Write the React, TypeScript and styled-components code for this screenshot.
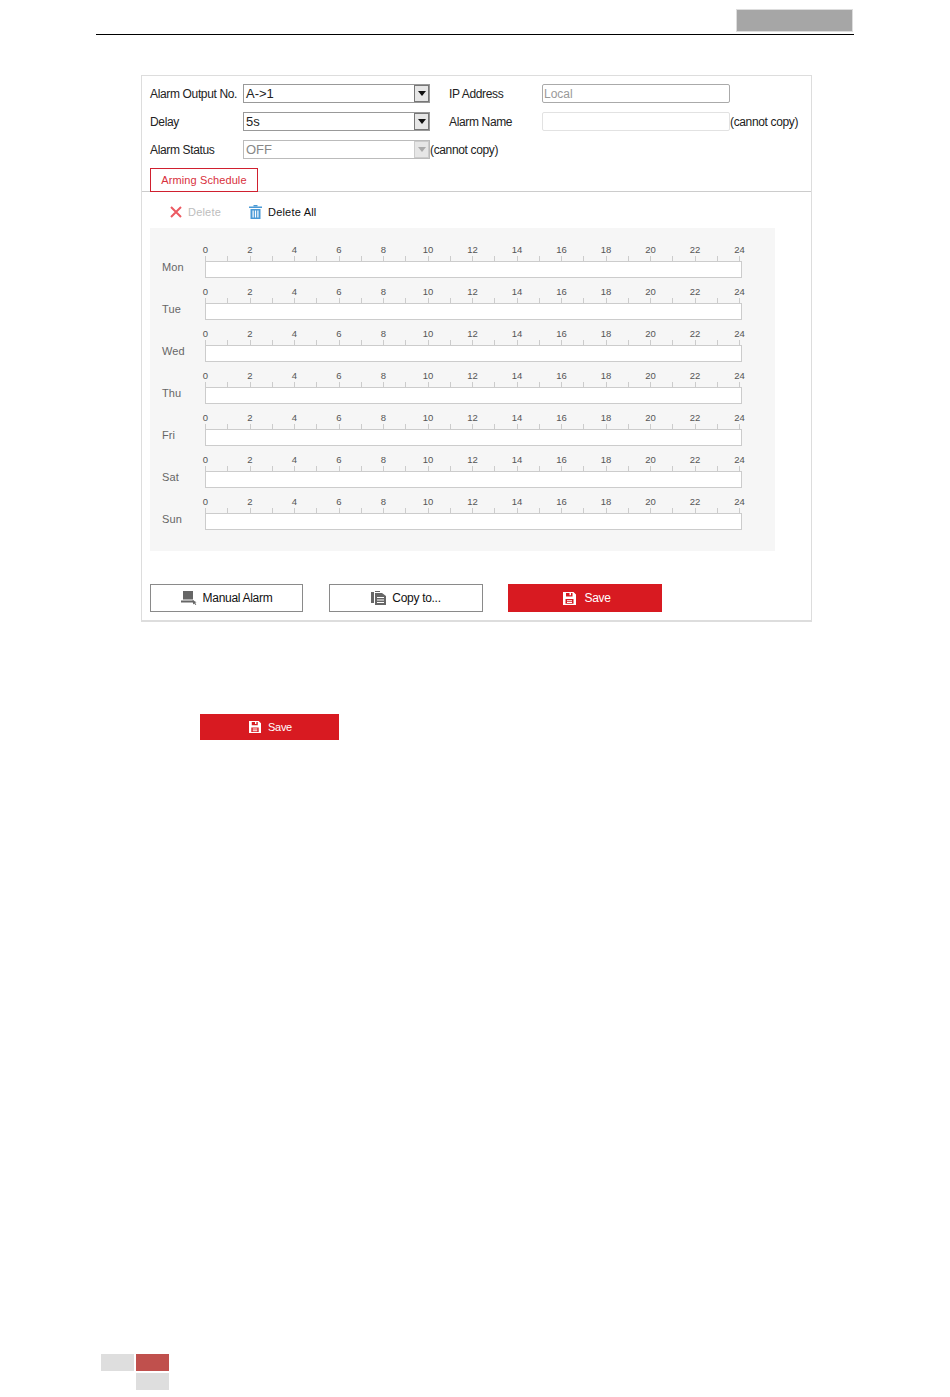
import React from "react";
import styled, { createGlobalStyle } from "styled-components";

const GlobalStyle = createGlobalStyle`
  * { box-sizing: border-box; }
  html, body { margin: 0; padding: 0; background: #fff; }
  body { font-family: "Liberation Sans", Arial, sans-serif; color: #222; }
`;

const Page = styled.div`
  width: 950px;
  height: 1397px;
  display: flex;
  flex-direction: column;
  overflow: hidden;
`;

const Header = styled.header`
  margin: 9px 96px 0;
  width: 758px;
  height: 26px;
  display: flex;
  justify-content: flex-end;
  border-bottom: 1px solid #000;
`;

const HeaderBlock = styled.div`
  width: 117px;
  height: 23px;
  margin-right: 1px;
  background: #a6a6a6;
  border: 1px solid #ddd;
`;

const Panel = styled.section`
  margin: 40px 0 0 141px;
  width: 671px;
  height: 547px;
  border: 1px solid #ddd;
  border-bottom-width: 2px;
  display: flex;
  flex-direction: column;
`;

const Form = styled.div`
  padding: 8px 0 0 8px;
  display: grid;
  grid-template-columns: 93px 187px 19px 93px 188px 60px;
  grid-auto-rows: 19px;
  row-gap: 9px;
  align-items: center;
  font-size: 12px;
`;

const Label = styled.span`
  white-space: nowrap;
  letter-spacing: -0.35px;
`;

const Hint = styled.span`
  white-space: nowrap;
  letter-spacing: -0.35px;
`;

const Select = styled.div<{ $disabled?: boolean }>`
  height: 19px;
  border: 1px solid ${p => (p.$disabled ? "#bbb" : "#999")};
  display: flex;
  align-items: center;
  justify-content: space-between;
  padding-left: 2px;
  font-size: 13px;
  color: ${p => (p.$disabled ? "#888" : "#222")};
`;

const Arrow = styled.div<{ $disabled?: boolean }>`
  width: 15px;
  height: 17px;
  background: #e6e6e6;
  border: 1px solid ${p => (p.$disabled ? "#ccc" : "#777")};
  display: flex;
  align-items: center;
  justify-content: center;
  &::after {
    content: "";
    border-left: 4px solid transparent;
    border-right: 4px solid transparent;
    border-top: 5px solid ${p => (p.$disabled ? "#aaa" : "#111")};
  }
`;

const TextBox = styled.div<{ $light?: boolean }>`
  height: 19px;
  border: 1px solid ${p => (p.$light ? "#e2e2e2" : "#aaa")};
  border-radius: 2px;
  padding-left: 1px;
  font-size: 12px;
  line-height: 18px;
  color: #999;
`;

const TabBar = styled.div`
  margin-top: 9px;
  padding-left: 8px;
  border-bottom: 1px solid #ccc;
  height: 24px;
`;

const Tab = styled.div`
  width: 108px;
  height: 24px;
  border: 1px solid #d0202f;
  background: #fff;
  color: #d8303c;
  font-size: 11px;
  letter-spacing: 0.1px;
  display: flex;
  align-items: center;
  justify-content: center;
`;

const Toolbar = styled.div`
  height: 36px;
  padding: 4px 0 0 28px;
  display: flex;
  align-items: center;
  font-size: 11px;
`;

const ToolItem = styled.div<{ $disabled?: boolean; $width: number }>`
  width: ${p => p.$width}px;
  display: flex;
  align-items: center;
  gap: 6px;
  color: ${p => (p.$disabled ? "#bdbdbd" : "#111")};
  letter-spacing: 0.2px;
`;

const Schedule = styled.div`
  margin-left: 8px;
  width: 625px;
  height: 323px;
  background: #f6f6f6;
  padding-top: 16px;
`;

const DayRow = styled.div`
  height: 42px;
  display: flex;
  align-items: flex-start;
  padding-left: 12px;
`;

const DayName = styled.div`
  width: 43px;
  margin-top: 17px;
  font-size: 11px;
  letter-spacing: 0.1px;
  color: #666;
`;

const Track = styled.div`
  width: 537px;
  display: flex;
  flex-direction: column;
`;

const Numbers = styled.div`
  height: 12px;
  margin-right: 2px;
  display: flex;
  justify-content: space-between;
  font-size: 9.5px;
  line-height: 12px;
  color: #555;
`;

const NumberCell = styled.span`
  width: 1px;
  display: flex;
  justify-content: center;
`;

const Ticks = styled.div`
  height: 5px;
  margin-right: 2px;
  display: flex;
  justify-content: space-between;
`;

const Tick = styled.span`
  width: 1px;
  background: #ccc;
`;

const Bar = styled.div`
  height: 17px;
  background: #fff;
  border: 1px solid #ccc;
`;

const Buttons = styled.div`
  margin: 33px 0 0 8px;
  display: flex;
  gap: 26px;
`;

const Button = styled.div<{ $primary?: boolean }>`
  width: 153px;
  height: 28px;
  display: flex;
  align-items: center;
  justify-content: center;
  gap: ${p => (p.$primary ? "8px" : "6px")};
  padding-left: ${p => (p.$primary ? "4px" : "0")};
  font-size: 12px;
  letter-spacing: -0.3px;
  border: ${p => (p.$primary ? "none" : "1px solid #8a8a8a")};
  background: ${p => (p.$primary ? "#d81a21" : "#fff")};
  color: ${p => (p.$primary ? "#fff" : "#111")};
`;

const WideButton = styled(Button)`
  width: 154px;
  margin-left: ${p => (p.$primary ? "-1px" : "0")};
`;

const LoneSave = styled(Button)`
  margin: 92px 0 0 200px;
  width: 139px;
  height: 26px;
  gap: 7px;
  padding-left: 2px;
  font-size: 11px;
`;

const Footer = styled.footer`
  margin: auto 0 7px 101px;
  display: grid;
  grid-template-columns: 33px 33px;
  grid-auto-rows: 17px;
  gap: 2px;
`;

const FooterCell = styled.div<{ $accent?: boolean; $col?: number }>`
  grid-column: ${p => p.$col ?? "auto"};
  background: ${p => (p.$accent ? "#c0504d" : "#dedede")};
`;

const DeleteIcon = () => (
  <svg width="12" height="12" viewBox="0 0 12 12">
    <path d="M1 1l10 10M11 1L1 11" stroke="#ec5a62" strokeWidth="2" fill="none" />
  </svg>
);

const TrashIcon = () => (
  <svg width="13" height="14" viewBox="0 0 13 14" fill="#4a9ad6">
    <rect x="4.5" y="0" width="4" height="1.5" />
    <rect x="0" y="1.5" width="13" height="1.5" />
    <path d="M1.5 4h10v10h-10zM3.5 5.5v7h1.2v-7zM5.9 5.5v7h1.2v-7zM8.3 5.5v7h1.2v-7z" fillRule="evenodd" />
  </svg>
);

const AlarmIcon = () => (
  <svg width="16" height="14" viewBox="0 0 16 14" fill="#666">
    <rect x="2" y="0" width="10" height="8.5" />
    <rect x="0" y="9.5" width="13" height="2" />
    <path d="M11.5 9l4 2.2-1.5.6 1.3 1.6-.8.6-1.3-1.6-1 1.2z" />
  </svg>
);

const CopyIcon = () => (
  <svg width="15" height="14" viewBox="0 0 15 14" fill="#666">
    <path d="M0 1h3v11H0zM4 0h5v1H4z" />
    <path d="M4 2h7l4 3v9H4zM6 6v1h7V6zM6 8.5v1h7v-1zM6 11v1h7v-1z" fillRule="evenodd" />
  </svg>
);

const SaveIcon = ({ size = 13 }: { size?: number }) => (
  <svg width={size} height={size} viewBox="0 0 13 13" fill="#fff">
    <path
      d="M0 0h10.5L13 2.5V13H0zM3 1v3.5h6.5V1H8v2.3H6.5V1zM2.5 7v4.8h8V7zM4 8.2h5v1H4zM4 10h5v1H4z"
      fillRule="evenodd"
    />
  </svg>
);

const DAYS = ["Mon", "Tue", "Wed", "Thu", "Fri", "Sat", "Sun"];
const HOURS = Array.from({ length: 13 }, (_, i) => i * 2);
const TICKS = Array.from({ length: 25 }, (_, i) => i);

const App = () => {
  return (
    <Page>
      <GlobalStyle />
      <Header>
        <HeaderBlock />
      </Header>
      <Panel>
        <Form>
          <Label>Alarm Output No.</Label>
          <Select>
            A-&gt;1
            <Arrow />
          </Select>
          <span />
          <Label>IP Address</Label>
          <TextBox>Local</TextBox>
          <span />

          <Label>Delay</Label>
          <Select>
            5s
            <Arrow />
          </Select>
          <span />
          <Label>Alarm Name</Label>
          <TextBox $light />
          <Hint>(cannot copy)</Hint>

          <Label>Alarm Status</Label>
          <Select $disabled>
            OFF
            <Arrow $disabled />
          </Select>
          <Hint>(cannot copy)</Hint>
        </Form>
        <TabBar>
          <Tab>Arming Schedule</Tab>
        </TabBar>
        <Toolbar>
          <ToolItem $disabled $width={79}>
            <DeleteIcon />
            Delete
          </ToolItem>
          <ToolItem $width={80}>
            <TrashIcon />
            Delete All
          </ToolItem>
        </Toolbar>
        <Schedule>
          {DAYS.map(day => (
            <DayRow key={day}>
              <DayName>{day}</DayName>
              <Track>
                <Numbers>
                  {HOURS.map(h => (
                    <NumberCell key={h}>{h}</NumberCell>
                  ))}
                </Numbers>
                <Ticks>
                  {TICKS.map(t => (
                    <Tick key={t} />
                  ))}
                </Ticks>
                <Bar />
              </Track>
            </DayRow>
          ))}
        </Schedule>
        <Buttons>
          <Button>
            <AlarmIcon />
            Manual Alarm
          </Button>
          <WideButton>
            <CopyIcon />
            Copy to...
          </WideButton>
          <WideButton $primary>
            <SaveIcon />
            Save
          </WideButton>
        </Buttons>
      </Panel>
      <LoneSave $primary>
        <SaveIcon size={12} />
        Save
      </LoneSave>
      <Footer>
        <FooterCell />
        <FooterCell $accent />
        <FooterCell $col={2} />
      </Footer>
    </Page>
  );
};

export default App;
